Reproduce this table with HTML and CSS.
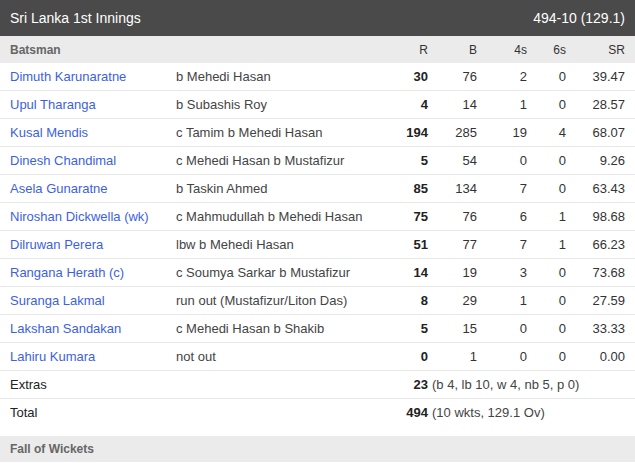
FILE: index.html
```html
<!DOCTYPE html>
<html>
<head>
<meta charset="utf-8">
<link rel="stylesheet" href="styles.css">
</head>
<body>
<div class="card">
  <div class="inn-head">
    <span class="inn-title">Sri Lanka 1st Innings</span>
    <span class="inn-score">494-10 (129.1)</span>
  </div>
  <div class="row col-head">
    <div class="c-name head-bold">Batsman</div>
    <div class="c-out"></div>
    <div class="num">R</div>
    <div class="num">B</div>
    <div class="num">4s</div>
    <div class="num">6s</div>
    <div class="num">SR</div>
  </div>

  <div class="row"><a class="c-name link">Dimuth Karunaratne</a><div class="c-out">b Mehedi Hasan</div><div class="num runs">30</div><div class="num">76</div><div class="num">2</div><div class="num">0</div><div class="num">39.47</div></div>
  <div class="row"><a class="c-name link">Upul Tharanga</a><div class="c-out">b Subashis Roy</div><div class="num runs">4</div><div class="num">14</div><div class="num">1</div><div class="num">0</div><div class="num">28.57</div></div>
  <div class="row"><a class="c-name link">Kusal Mendis</a><div class="c-out">c Tamim b Mehedi Hasan</div><div class="num runs">194</div><div class="num">285</div><div class="num">19</div><div class="num">4</div><div class="num">68.07</div></div>
  <div class="row"><a class="c-name link">Dinesh Chandimal</a><div class="c-out">c Mehedi Hasan b Mustafizur</div><div class="num runs">5</div><div class="num">54</div><div class="num">0</div><div class="num">0</div><div class="num">9.26</div></div>
  <div class="row"><a class="c-name link">Asela Gunaratne</a><div class="c-out">b Taskin Ahmed</div><div class="num runs">85</div><div class="num">134</div><div class="num">7</div><div class="num">0</div><div class="num">63.43</div></div>
  <div class="row"><a class="c-name link">Niroshan Dickwella (wk)</a><div class="c-out">c Mahmudullah b Mehedi Hasan</div><div class="num runs">75</div><div class="num">76</div><div class="num">6</div><div class="num">1</div><div class="num">98.68</div></div>
  <div class="row"><a class="c-name link">Dilruwan Perera</a><div class="c-out">lbw b Mehedi Hasan</div><div class="num runs">51</div><div class="num">77</div><div class="num">7</div><div class="num">1</div><div class="num">66.23</div></div>
  <div class="row"><a class="c-name link">Rangana Herath (c)</a><div class="c-out">c Soumya Sarkar b Mustafizur</div><div class="num runs">14</div><div class="num">19</div><div class="num">3</div><div class="num">0</div><div class="num">73.68</div></div>
  <div class="row"><a class="c-name link">Suranga Lakmal</a><div class="c-out">run out (Mustafizur/Liton Das)</div><div class="num runs">8</div><div class="num">29</div><div class="num">1</div><div class="num">0</div><div class="num">27.59</div></div>
  <div class="row"><a class="c-name link">Lakshan Sandakan</a><div class="c-out">c Mehedi Hasan b Shakib</div><div class="num runs">5</div><div class="num">15</div><div class="num">0</div><div class="num">0</div><div class="num">33.33</div></div>
  <div class="row"><a class="c-name link">Lahiru Kumara</a><div class="c-out">not out</div><div class="num runs">0</div><div class="num">1</div><div class="num">0</div><div class="num">0</div><div class="num">0.00</div></div>

  <div class="row sum-row"><div class="sum-label">Extras</div><div class="num runs">23</div><div class="sum-detail">(b 4, lb 10, w 4, nb 5, p 0)</div></div>
  <div class="row sum-row total"><div class="sum-label">Total</div><div class="num runs">494</div><div class="sum-detail">(10 wkts, 129.1 Ov)</div></div>

  <div class="fow-head head-bold">Fall of Wickets</div>
</div>
</body>
</html>
```
FILE: styles.css
```css
html, body {
  margin: 0;
  padding: 0;
  background: #fff;
}
body {
  font-family: "Liberation Sans", Arial, sans-serif;
  font-size: 13px;
  color: #333;
}
.card {
  width: 635px;
}
.inn-head {
  height: 36px;
  background: #4a4a4a;
  color: #fff;
  font-size: 14px;
  display: flex;
  align-items: center;
  justify-content: space-between;
  padding: 0 10px;
}
.row {
  display: grid;
  grid-template-columns: 166px 202px 50px 49px 50px 39px 59px;
  align-items: center;
  padding: 0 10px;
  height: 27px;
  border-bottom: 1px solid #e8e8e8;
}
.col-head {
  background: #ebebeb;
  height: 27px;
  border-bottom: none;
  color: #666;
  font-size: 12px;
}
.head-bold {
  font-weight: bold;
  color: #666;
  font-size: 12px;
}
.link {
  color: #3d5fe2;
  text-decoration: none;
  white-space: nowrap;
}
.c-out {
  color: #444;
  white-space: nowrap;
}
.num {
  text-align: right;
  color: #333;
}
.runs {
  font-weight: bold;
  color: #222;
}
.sum-row {
  grid-template-columns: 368px 50px auto;
}
.sum-label {
  color: #222;
}
.sum-detail {
  padding-left: 4px;
  color: #444;
}
.total {
  border-bottom: none;
  margin-bottom: 10px;
}
.fow-head {
  height: 26px;
  background: #ebebeb;
  display: flex;
  align-items: center;
  padding: 0 10px;
}
```
